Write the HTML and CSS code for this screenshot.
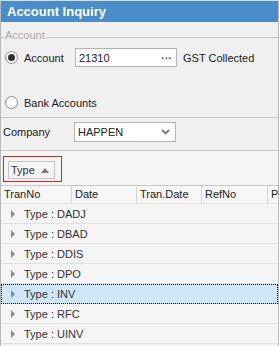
FILE: index.html
```html
<!DOCTYPE html>
<html lang="en">

<head>
    <meta charset="UTF-8">
    <meta name="viewport" content="width=device-width, initial-scale=1.0">
    <title>Account Inquiry</title>
    <link rel="stylesheet" href="styles.css">
</head>

<body>
    <div class="window">
        <div class="title">Account Inquiry</div>

        <div class="form">
            <div class="group-label">
                <span class="tick"></span>
                <span class="group-text">Account</span>
                <span class="group-line"></span>
            </div>

            <div class="radio-row first">
                <span class="radio checked"></span>
                <span class="radio-text">Account</span>
                <div class="edit">
                    <span class="edit-value">21310</span>
                    <span class="dots">···</span>
                </div>
                <span class="edit-desc">GST Collected</span>
            </div>

            <div class="radio-row bank">
                <span class="radio"></span>
                <span class="radio-text">Bank Accounts</span>
            </div>

            <div class="sep"></div>

            <div class="field-row">
                <span class="field-label">Company</span>
                <div class="edit combo">
                    <span class="edit-value">HAPPEN</span>
                    <svg class="chevron" width="9" height="6" viewBox="0 0 9 6">
                        <polyline points="1,1 4.5,4.5 8,1" fill="none" stroke="#7a7a7a" stroke-width="1.8" />
                    </svg>
                </div>
            </div>

            <div class="sep sep-bottom"></div>
        </div>

        <!-- group by panel -->
        <div class="group-panel">
            <div class="group-box">
                <div class="group-btn">Type <span class="sort-up"></span></div>
            </div>
        </div>

        <div class="grid">
            <div class="grid-head">
                <div class="col c1">TranNo</div>
                <div class="col c2">Date</div>
                <div class="col c3">Tran.Date</div>
                <div class="col c4">RefNo</div>
                <div class="col c5">Pe</div>
            </div>
            <div class="grid-row"><span class="expand"></span>Type : DADJ</div>
            <div class="grid-row"><span class="expand"></span>Type : DBAD</div>
            <div class="grid-row"><span class="expand"></span>Type : DDIS</div>
            <div class="grid-row"><span class="expand"></span>Type : DPO</div>
            <div class="grid-row selected"><span class="expand"></span>Type : INV</div>
            <div class="grid-row"><span class="expand"></span>Type : RFC</div>
            <div class="grid-row"><span class="expand"></span>Type : UINV</div>
        </div>
    </div>
</body>

</html>
```

FILE: styles.css
```css
* {
    box-sizing: border-box;
}

body {
    margin: 0;
    padding: 0;
    font-family: "Liberation Sans", Arial, sans-serif;
    font-size: 11px;
    color: #222;
    background: #f0f0f0;
}

.window {
    width: 279px;
    height: 346px;
    overflow: hidden;
    border: 1px solid #b8b8b8;
    border-top-color: #dcdcdc;
    border-bottom: none;
    background: #f0f0f0;
}

.title {
    height: 21px;
    line-height: 21px;
    padding-left: 6px;
    background: #4a8dcb;
    color: #fff;
    font-size: 13px;
    font-weight: bold;
}

/* 上半部分表单 */
.form {
    padding-top: 6px;
}

.group-label {
    display: flex;
    align-items: center;
    height: 13px;
    color: #aaa;
}

.group-label .tick,
.group-label .group-line {
    height: 1px;
    margin-top: 6px;
    background: #c4c4c4;
}

.group-label .tick {
    width: 3px;
}

.group-label .group-text {
    padding: 0 1px;
}

.group-label .group-line {
    flex: 1;
}

.radio-row {
    display: flex;
    align-items: center;
    height: 19px;
    padding-left: 4px;
    white-space: nowrap;
}

.radio-row.first {
    margin-top: 7px;
}

.radio-row.bank {
    margin-top: 26px;
}

.radio {
    flex: none;
    width: 13px;
    height: 13px;
    border: 1px solid #8c8c8c;
    border-radius: 50%;
    background: #fff;
    display: flex;
    align-items: center;
    justify-content: center;
}

.radio.checked::after {
    content: "";
    width: 7px;
    height: 7px;
    border-radius: 50%;
    background: #333;
}

.radio-text {
    margin-left: 6px;
    min-width: 51px;
}

.edit {
    flex: none;
    display: flex;
    align-items: center;
    width: 102px;
    height: 19px;
    padding: 0 3px 0 3px;
    border: 1px solid #b4b4b4;
    background: #fff;
}

.edit-value {
    flex: 1;
}

.dots {
    color: #555;
    font-weight: bold;
    margin-right: 1px;
}

.edit-desc {
    margin-left: 6px;
}

.sep {
    height: 1px;
    margin-top: 5px;
    background: #c8c8c8;
}

.sep-bottom {
    margin-top: 8px;
}

.field-row {
    display: flex;
    align-items: center;
    height: 20px;
    margin-top: 4px;
    padding-left: 2px;
}

.field-label {
    width: 71px;
}

.combo {
    height: 20px;
}

.chevron {
    margin-right: 2px;
}

/* 分组面板 */
.group-panel {
    height: 34px;
    padding: 5px 0 0 2px;
    background: #f5f5f5;
}

.group-box {
    width: 59px;
    height: 26px;
    padding: 4px 0 0 4px;
    border: 1px solid #e02020;
}

.group-btn {
    display: flex;
    align-items: center;
    width: 47px;
    height: 18px;
    padding-left: 2px;
    border: 1px solid #c4c4c4;
    color: #333;
}

.sort-up {
    width: 0;
    height: 0;
    margin-left: 6px;
    border-left: 4px solid transparent;
    border-right: 4px solid transparent;
    border-bottom: 5px solid #7a7a7a;
}

/* 表格 */
.grid {
    background: #f5f5f5;
}

.grid-head {
    display: flex;
    height: 19px;
    border-top: 1px solid #c8c8c8;
    border-bottom: 1px solid #e6e6e6;
    background: #f7f7f7;
    white-space: nowrap;
}

.col {
    line-height: 17px;
    padding-left: 3px;
    border-right: 1px solid #d4d4d4;
    overflow: hidden;
}

.c1 {
    width: 71px;
}

.c2,
.c3 {
    width: 65px;
}

.c4 {
    width: 66px;
}

.c5 {
    flex: 1;
    border-right: none;
}

.grid-row {
    display: flex;
    align-items: center;
    height: 20px;
    padding-left: 10px;
    border-bottom: 1px solid #e0e0e0;
    color: #333;
}

.grid-row.selected {
    background: #cde6f8;
    border: 1px dotted #000;
    padding-left: 9px;
}

.expand {
    width: 0;
    height: 0;
    margin-right: 9px;
    border-top: 4px solid transparent;
    border-bottom: 4px solid transparent;
    border-left: 4px solid #8a8a8a;
}
```
